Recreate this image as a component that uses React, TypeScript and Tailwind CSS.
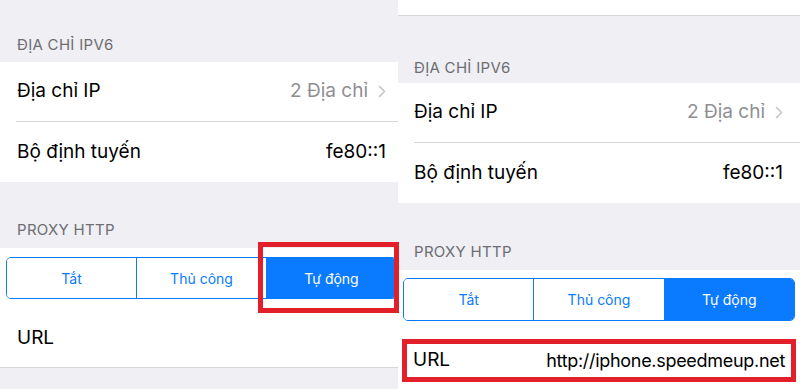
const FONT = { fontFamily: 'Inter, "Noto Sans", "Liberation Sans", sans-serif' };

function Chevron() {
  return (
    <svg width="8" height="13" viewBox="0 0 8 13" className="ml-[10px]" fill="none">
      <path d="M1.5 1.5 L6.5 6.5 L1.5 11.5" stroke="#c4c4c9" strokeWidth="1.6" strokeLinecap="round" strokeLinejoin="round" />
    </svg>
  );
}

function Segmented() {
  const items = ['Tắt', 'Thủ công', 'Tự động'];
  return (
    <div className="flex h-full w-full overflow-hidden rounded-[5px] border border-[#0a7aff]">
      {items.map((label, i) => (
        <div
          key={label}
          className={`flex flex-1 items-center justify-center text-[14px] ${i > 0 ? 'border-l border-[#0a7aff]' : ''} ${i === 2 ? 'bg-[#0a7aff] text-white' : 'bg-white text-[#0a7aff]'}`}
        >
          {label}
        </div>
      ))}
    </div>
  );
}

function Header({ children, pl }: { children: string; pl: string }) {
  return <div className={`text-[15px] leading-[16px] tracking-[0.3px] text-[#6d6d72] ${pl}`}>{children}</div>;
}

function IpRows({ pl, pr }: { pl: string; pr: string }) {
  return (
    <div className="bg-white">
      <div className={`flex h-[59px] items-center justify-between ${pl} ${pr}`}>
        <span className="text-[19px] text-black">Địa chỉ IP</span>
        <span className="flex items-center text-[19px] text-[#8e8e93]">
          2 Địa chỉ
          <Chevron />
        </span>
      </div>
      <div className="ml-[16px] h-px bg-[#d6d6da]" />
      <div className={`flex h-[60px] items-center justify-between ${pl} ${pr}`}>
        <span className="text-[19px] text-black">Bộ định tuyến</span>
        <span className="text-[19px] text-black">fe80::1</span>
      </div>
    </div>
  );
}

function LeftPanel() {
  return (
    <div className="flex h-full w-[398px] flex-col bg-[#efeff4]">
      <div className="flex h-[62px] items-end pb-[9px]">
        <Header pl="pl-[17px]">ĐỊA CHỈ IPV6</Header>
      </div>
      <IpRows pl="pl-[17px]" pr="pr-[12px]" />
      <div className="flex h-[66px] items-end pb-[10px]">
        <Header pl="pl-[17px]">PROXY HTTP</Header>
      </div>
      <div className="bg-white pt-[9px]">
        <div className="ml-[6px] mr-px h-[42px]">
          <Segmented />
        </div>
        <div className="flex h-[68px] items-center pl-[17px] pt-[10px]">
          <span className="text-[19px] text-black">URL</span>
        </div>
      </div>
      <div className="h-px bg-[#d6d6da]" />
    </div>
  );
}

function RightPanel() {
  return (
    <div className="flex h-full flex-1 flex-col bg-[#efeff4]">
      <div className="h-[15px] bg-white" />
      <div className="h-px bg-[#d6d6da]" />
      <div className="flex h-[67px] items-end pb-[7px]">
        <Header pl="pl-[16px]">ĐỊA CHỈ IPV6</Header>
      </div>
      <IpRows pl="pl-[16px]" pr="pr-[17px]" />
      <div className="flex h-[67px] items-end pb-[10px]">
        <Header pl="pl-[16px]">PROXY HTTP</Header>
      </div>
      <div className="flex-1 bg-white pt-[8px]">
        <div className="mx-[5px] h-[43px]">
          <Segmented />
        </div>
        <div className="mx-[4px] mt-[18px] flex h-[43px] items-center justify-between border-[5px] border-[#e3202a] px-[6px]">
          <span className="text-[19px] text-black">URL</span>
          <span className="text-[18px] tracking-[-0.3px] text-black">http://iphone.speedmeup.net</span>
        </div>
      </div>
    </div>
  );
}

export default function App() {
  return (
    <div className="relative flex h-[389px] w-[800px] overflow-hidden bg-white" style={FONT}>
      <LeftPanel />
      <RightPanel />
      <div className="absolute left-[258px] top-[242px] h-[71px] w-[141px] border-[5px] border-[#e3202a]" />
    </div>
  );
}
